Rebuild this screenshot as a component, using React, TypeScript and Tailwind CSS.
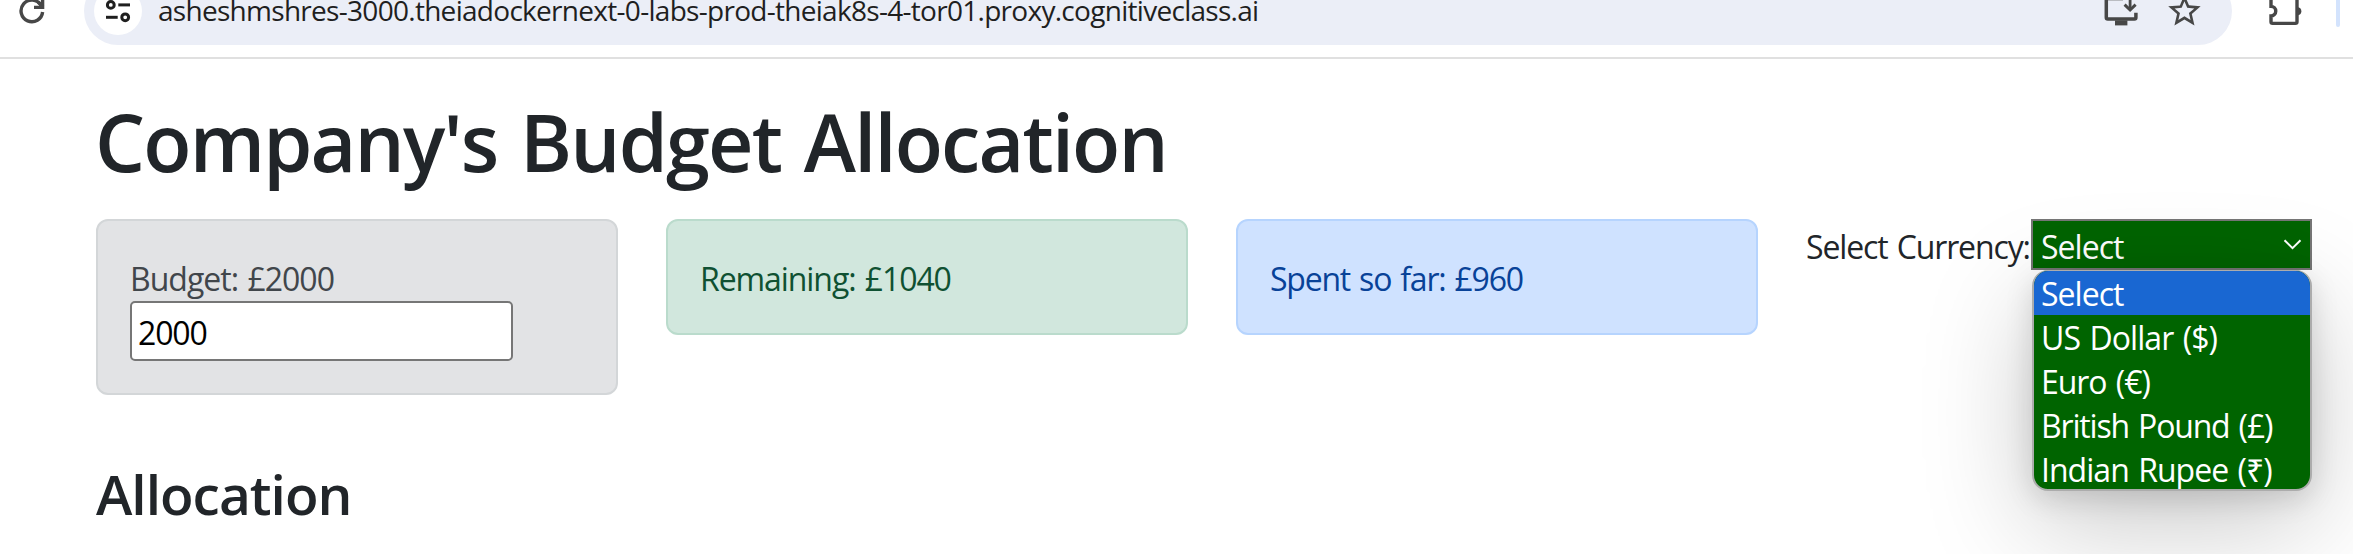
import { ReactNode } from "react";

function ReloadIcon() {
  return (
    <svg width="84" height="45" viewBox="0 0 84 45" fill="none" stroke="#474747" strokeWidth="3.4">
      <path d="M42.6 12A10.8 10.8 0 1 1 41 5.2" />
      <path d="M42.6 -4V7.4H34" />
      <path d="M38 2L43 7" />
    </svg>
  );
}

function TuneIcon() {
  return (
    <svg width="48" height="48" viewBox="94 -13 48 48" fill="none" stroke="#1f1f1f" strokeWidth="3">
      <circle cx="110.8" cy="4.9" r="3.4" />
      <path d="M118.3 4.9H130" />
      <path d="M106 17.3H117.7" />
      <circle cx="125.2" cy="17.3" r="3.4" />
    </svg>
  );
}

function InstallIcon() {
  return (
    <svg width="36" height="45" viewBox="2102 0 36 45" fill="none" stroke="#474747" strokeWidth="3.5">
      <path d="M2105.3 -4V17.5Q2105.3 19 2106.8 19H2133.4Q2134.9 19 2134.9 17.5V12.8" />
      <path d="M2107 0H2122" strokeWidth="1" stroke="#8a8a8c" />
      <path d="M2114 22.9H2126.4" strokeWidth="5" />
      <path d="M2129.1 -4V10" strokeWidth="2.8" />
      <path d="M2123.6 4.6L2129.1 10L2134.6 4.6" strokeWidth="3" />
    </svg>
  );
}

function StarIcon() {
  return (
    <svg width="39" height="45" viewBox="0 0 39 45" fill="#474747">
      <path
        transform="translate(0 -8.6) scale(1.62)"
        d="M22 9.24l-7.19-.62L12 2 9.19 8.63 2 9.24l5.46 4.73L5.82 21 12 17.27 18.18 21l-1.63-7.03L22 9.24zM12 15.4l-3.76 2.27 1-4.28-3.32-2.88 4.38-.38L12 6.1l1.71 4.04 4.38.38-3.32 2.88 1 4.28L12 15.4z"
      />
    </svg>
  );
}

function ExtensionIcon() {
  return (
    <svg width="36" height="45" viewBox="2268 0 36 45" fill="none" stroke="#474747" strokeWidth="3.4">
      <path d="M2271 -4V6.4A4.7 4.7 0 0 1 2271 15.9V21.8Q2271 23.4 2272.6 23.4H2295.4Q2297 23.4 2297 21.8V-4" />
      <path d="M2298 7.3A4 4 0 0 1 2298 15.2Z" fill="#474747" stroke="none" />
    </svg>
  );
}

function BrowserBar() {
  return (
    <header className="h-[59px] border-b-2 border-[#e0e0e0]">
      <div className="flex items-start">
        <ReloadIcon />
        <div className="-mt-[23px] flex h-[68px] w-[2148px] items-center rounded-full bg-[#ebeef7] pl-2.5">
          <div className="size-12 rounded-full bg-white">
            <TuneIcon />
          </div>
          <span className="ml-4 pb-0.5 text-[28px] leading-5 tracking-[-0.71px] text-[#1f1f1f]">
            asheshmshres-3000.theiadockernext-0-labs-prod-theiak8s-4-tor01.proxy.cognitiveclass.ai
          </span>
          <div className="mr-[28px] ml-auto flex gap-[26px] pt-[23px]">
            <InstallIcon />
            <StarIcon />
          </div>
        </div>
        <div className="ml-9">
          <ExtensionIcon />
        </div>
        <div className="ml-8 h-[27px] w-1 rounded-b-sm bg-[#d3e3fd]" />
      </div>
    </header>
  );
}

function Alert({ className, children }: { className: string; children: ReactNode }) {
  return (
    <div
      className={`w-[522px] shrink-0 rounded-xl border-2 px-8 pt-[34px] pb-[30px] text-[32px] leading-[48px] [word-spacing:2px] ${className}`}
    >
      {children}
    </div>
  );
}

const options = [
  { label: "Select", className: "bg-[#1967d2] tracking-[-0.98px]" },
  { label: "US Dollar ($)", className: "tracking-[-0.93px]" },
  { label: "Euro (€)", className: "tracking-[-1.05px]" },
  { label: "British Pound (£)", className: "tracking-[-1.18px]" },
  { label: "Indian Rupee (₹)", className: "tracking-[-0.97px]" },
];

function CurrencySelect() {
  return (
    <div className="flex w-[506px] shrink-0 items-start text-[32px] [word-spacing:2px]">
      <label className="w-[225px] shrink-0 pt-1 leading-[48px] tracking-[-1.13px] whitespace-nowrap text-[#212529]">
        Select Currency:
      </label>
      <div className="relative w-[281px] text-white">
        <div className="flex h-[51px] items-center justify-between border-2 border-[#767676] bg-[#006400] pr-2 pl-2">
          <span className="pt-1 leading-[44px] tracking-[-0.98px]">Select</span>
          <svg width="19" height="12" viewBox="0 0 19 12" fill="none" stroke="white" strokeWidth="2">
            <path d="M1.5 1.2L9.5 9.2L17.5 1.2" />
          </svg>
        </div>
        <ul className="absolute top-[51px] left-px h-[221px] w-[280px] overflow-hidden rounded-2xl border-x-2 border-t border-b-2 border-[#acacac] bg-[#006400] shadow-[0_32px_110px_rgba(0,0,0,0.22),0_8px_28px_rgba(0,0,0,0.13)]">
          {options.map((option) => (
            <li key={option.label} className={`h-11 pl-[7px] leading-[45px] whitespace-nowrap ${option.className}`}>
              {option.label}
            </li>
          ))}
        </ul>
      </div>
    </div>
  );
}

export default function App() {
  return (
    <div className="h-[554px] overflow-hidden bg-white font-['Open_Sans','Noto_Sans',sans-serif] text-[#212529]">
      <BrowserBar />
      <main className="px-24 pt-[35px]">
        <h1 className="-ml-px text-[79px] leading-[96px] font-semibold tracking-[-1.82px] [word-spacing:4px]">
          Company's Budget Allocation
        </h1>
        <div className="mt-[29px] flex items-start gap-12">
          <Alert className="border-[#d3d6d8] bg-[#e2e3e5] tracking-[-0.99px] text-[#41464b]">
            <div>Budget: £2000</div>
            <input
              type="text"
              defaultValue="2000"
              className="-mt-0.5 mb-0.5 block h-[60px] w-[383px] rounded-[5px] border-2 border-[#767676] bg-white px-1.5 pt-0.5 tracking-[-1.15px] text-black"
            />
          </Alert>
          <Alert className="border-[#badbcc] bg-[#d1e7dd] tracking-[-1.08px] text-[#0f5132]">Remaining: £1040</Alert>
          <Alert className="border-[#b6d4fe] bg-[#cfe2ff] tracking-[-1.22px] text-[#084298]">Spent so far: £960</Alert>
          <CurrencySelect />
        </div>
        <h3 className="mt-[65px] text-[55px] leading-[68px] font-semibold tracking-[-1px]">Allocation</h3>
      </main>
    </div>
  );
}
